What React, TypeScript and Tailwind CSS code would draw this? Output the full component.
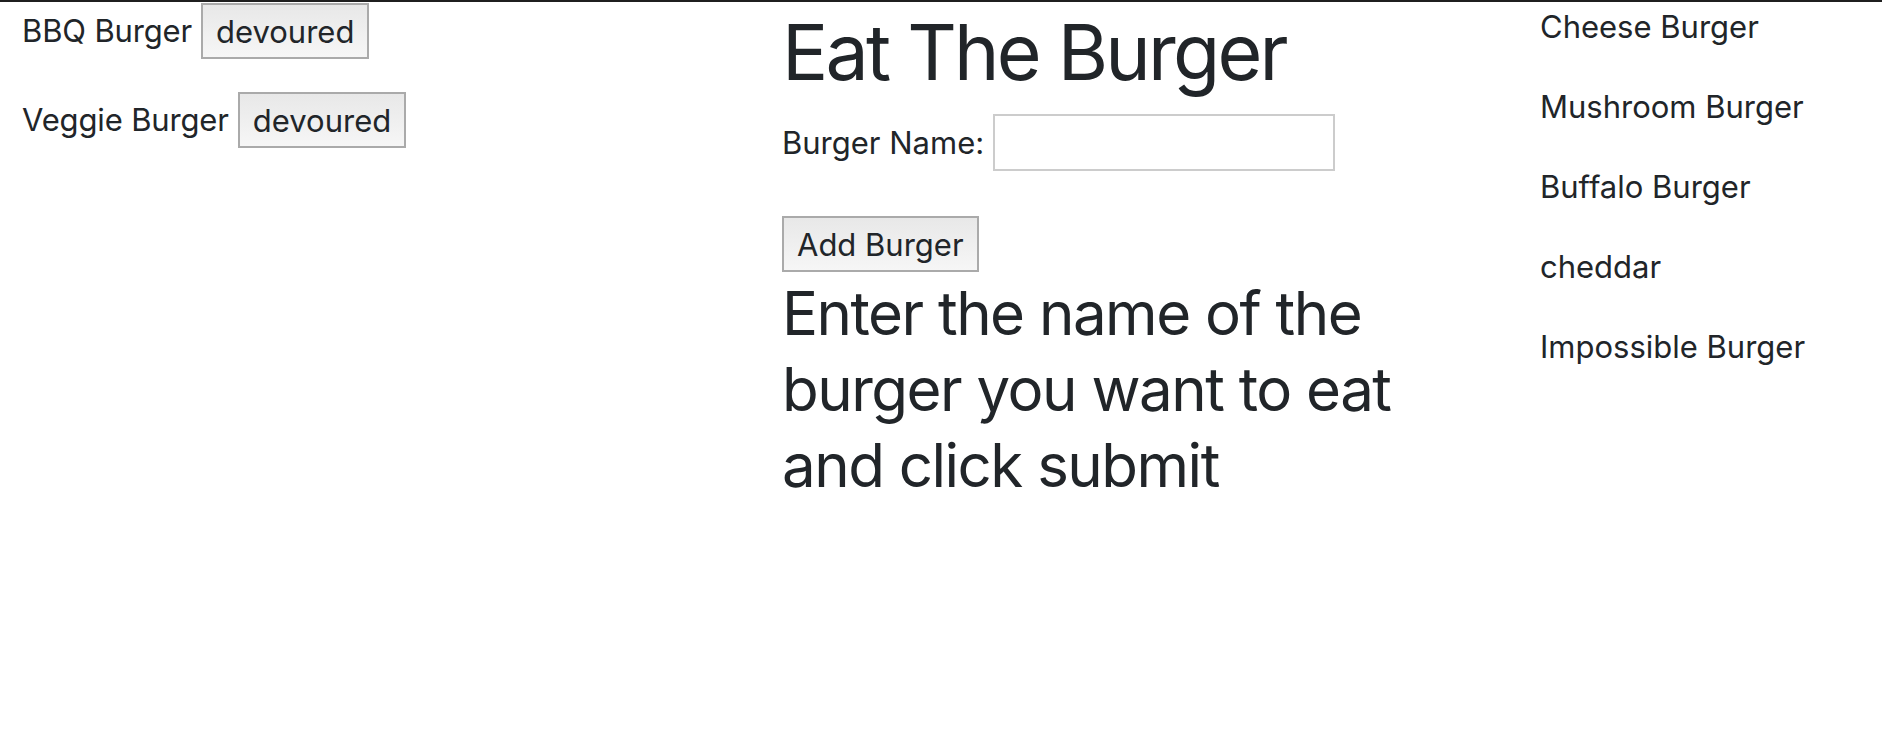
import React from "react";

const devouredBurgers = ["BBQ Burger", "Veggie Burger"];
const menuBurgers = [
  "Cheese Burger",
  "Mushroom Burger",
  "Buffalo Burger",
  "cheddar",
  "Impossible Burger",
];

const GrayButton = ({ label, className = "" }: { label: string; className?: string }) => (
  <button
    type="button"
    className={
      "h-[56px] px-[13px] border-2 border-[#aaaaaa] bg-gradient-to-b from-[#e8e8e8] to-[#f6f6f6] text-[31px] leading-none whitespace-nowrap text-[#212529] " +
      className
    }
  >
    {label}
  </button>
);

export default function App() {
  return (
    <div className="min-h-screen bg-white border-t-2 border-[#1f1f1f] font-['Inter',sans-serif] text-[#212529] text-[31px] overflow-hidden">
      <div className="flex">
        {/* eaten burgers */}
        <div className="w-[782px] shrink-0 pl-[22px] pt-[1px] flex flex-col gap-[33px]">
          {devouredBurgers.map((name) => (
            <div key={name} className="flex items-center gap-[9px]">
              <span className="tracking-[-0.15px]">{name}</span>
              <GrayButton label="devoured" />
            </div>
          ))}
        </div>

        {/* form */}
        <div className="w-[758px] shrink-0">
          <h1 className="mt-[4px] text-[77px] leading-[1.2] tracking-[-2.8px]">Eat The Burger</h1>
          <form className="mt-[16px] flex flex-col items-start">
            <div className="flex items-center gap-[9px]">
              <label htmlFor="burger">Burger Name:</label>
              <input
                id="burger"
                type="text"
                className="w-[342px] h-[57px] border-2 border-[#cccccc] bg-white outline-none"
              />
            </div>
            <GrayButton label="Add Burger" className="mt-[45px]" />
          </form>
          <h2 className="mt-[3px] w-[660px] text-[60px] leading-[76px] tracking-[-1.5px]">
            Enter the name of the burger you want to eat and click submit
          </h2>
        </div>

        {/* burgers to eat */}
        <div className="flex-1 pt-[4px] flex flex-col gap-[38px]">
          {menuBurgers.map((name) => (
            <div key={name} className="leading-[42px] whitespace-nowrap">
              {name}
            </div>
          ))}
        </div>
      </div>
    </div>
  );
}
